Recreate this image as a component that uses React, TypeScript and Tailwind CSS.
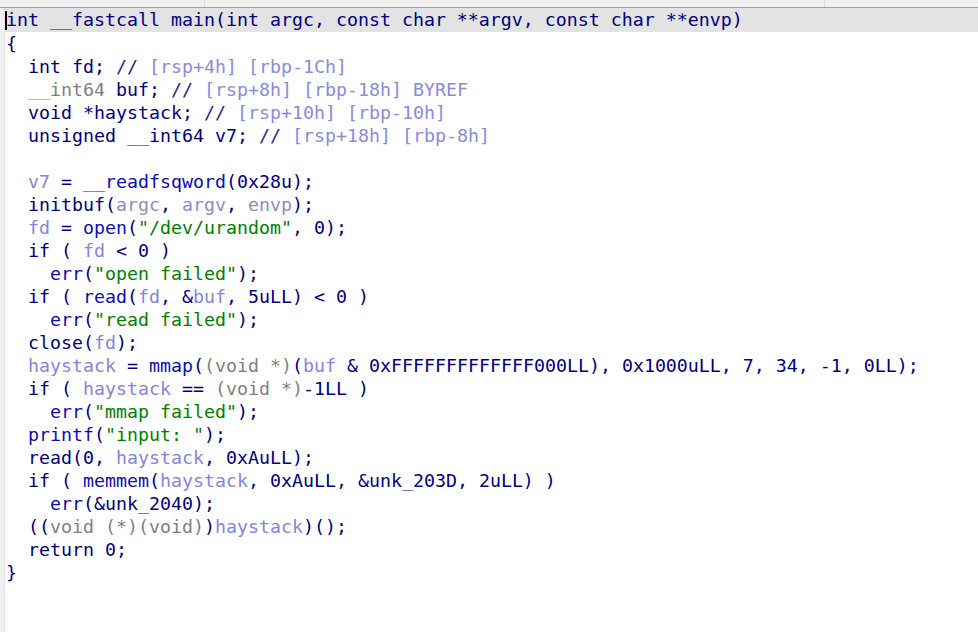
type Seg = [string, string];

const N = "text-[#000080]";
const F = "text-[#0c0cb4]";
const V = "text-[#8484e2]";
const A = "text-[#8c8cc4]";
const C = "text-[#8a8ae0]";
const G = "text-[#7f7f7f]";
const S = "text-[#008000]";
const D = "text-[#2424a0]";

const lines: Seg[][] = [
  [["int __fastcall main(int argc, const char **argv, const char **envp)", N]],
  [["{", N]],
  [["  int fd; ", N], ["// ", D], ["[rsp+4h] [rbp-1Ch]", C]],
  [["  ", N], ["__int64", G], [" buf; ", N], ["// ", D], ["[rsp+8h] [rbp-18h] BYREF", C]],
  [["  void *haystack; ", N], ["// ", D], ["[rsp+10h] [rbp-10h]", C]],
  [["  unsigned __int64 v7; ", N], ["// ", D], ["[rsp+18h] [rbp-8h]", C]],
  [],
  [["  ", N], ["v7", V], [" = ", N], ["__readfsqword", F], ["(0x28u);", N]],
  [["  initbuf(", N], ["argc", A], [", ", N], ["argv", A], [", ", N], ["envp", A], [");", N]],
  [["  ", N], ["fd", V], [" = ", N], ["open", F], ["(", N], ['"/dev/urandom"', S], [", 0);", N]],
  [["  if ( ", N], ["fd", V], [" < 0 )", N]],
  [["    ", N], ["err", F], ["(", N], ['"open failed"', S], [");", N]],
  [["  if ( ", N], ["read", F], ["(", N], ["fd", V], [", &", N], ["buf", V], [", 5uLL) < 0 )", N]],
  [["    ", N], ["err", F], ["(", N], ['"read failed"', S], [");", N]],
  [["  close(", N], ["fd", V], [");", N]],
  [
    ["  ", N],
    ["haystack", V],
    [" = ", N],
    ["mmap", F],
    ["(", N],
    ["(void *)", G],
    ["(", N],
    ["buf", V],
    [" & 0xFFFFFFFFFFFFF000LL), 0x1000uLL, 7, 34, -1, 0LL);", N],
  ],
  [["  if ( ", N], ["haystack", V], [" == ", N], ["(void *)", G], ["-1LL )", N]],
  [["    ", N], ["err", F], ["(", N], ['"mmap failed"', S], [");", N]],
  [["  ", N], ["printf", F], ["(", N], ['"input: "', S], [");", N]],
  [["  read(0, ", N], ["haystack", V], [", 0xAuLL);", N]],
  [["  if ( ", N], ["memmem", F], ["(", N], ["haystack", V], [", 0xAuLL, &unk_203D, 2uLL) )", N]],
  [["    ", N], ["err", F], ["(&unk_2040);", N]],
  [["  ((", N], ["void (*)(void)", G], [")", N], ["haystack", V], [")();", N]],
  [["  return 0;", N]],
  [["}", N]],
];

export default function App() {
  return (
    <div
      className="flex h-[632px] w-[978px] flex-col overflow-hidden bg-white"
      style={{ fontFamily: '"DejaVu Sans Mono", monospace' }}
    >
      {/* tab strip */}
      <div className="flex h-[8px] shrink-0 border-b border-[#a0a0a0] bg-[#f0f0f0]">
        <div className="w-[205px] border-r border-[#dcdcdc]" />
        <div className="w-[620px] border-r border-[#dcdcdc]" />
        <div className="flex-1" />
      </div>

      <div className="flex flex-1">
        <div className="w-[5px] shrink-0 border-r border-[#e2e2e2] bg-[#f0f0f0]" />
        <div className="relative flex-1 text-[18.27px]">
          {lines.map((segs, i) => (
            <div
              key={i}
              className={
                i === 0
                  ? "flex h-[24px] items-center whitespace-pre bg-[#e3e3e3] pl-[1px] leading-[24px]"
                  : "flex h-[23px] items-center whitespace-pre pl-[1px] leading-[23px]"
              }
            >
              {segs.map(([t, c], j) => (
                <span key={j} className={c}>
                  {t}
                </span>
              ))}
            </div>
          ))}
          <div className="absolute left-[0px] top-[3px] h-[19px] w-[2px] bg-black" />
        </div>
      </div>
    </div>
  );
}
